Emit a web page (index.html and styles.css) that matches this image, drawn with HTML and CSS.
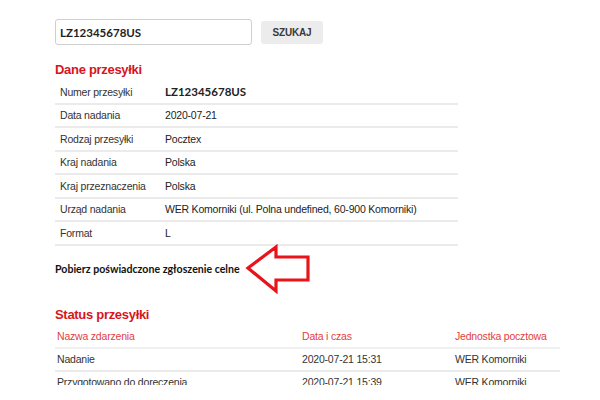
FILE: index.html
```html
<!DOCTYPE html>
<html lang="pl">
<head>
<meta charset="utf-8">
<title>Śledzenie przesyłki</title>
<link rel="stylesheet" href="styles.css">
</head>
<body>
<div class="page">
  <div class="search">
    <input class="search-input" type="text" value="LZ12345678US">
    <button class="search-btn">SZUKAJ</button>
  </div>

  <h2 class="section-title">Dane przesyłki</h2>
  <table class="details">
    <tr><td class="label">Numer przesyłki</td><td class="value strong">LZ12345678US</td></tr>
    <tr><td class="label">Data nadania</td><td class="value">2020-07-21</td></tr>
    <tr><td class="label">Rodzaj przesyłki</td><td class="value">Pocztex</td></tr>
    <tr><td class="label">Kraj nadania</td><td class="value">Polska</td></tr>
    <tr><td class="label">Kraj przeznaczenia</td><td class="value">Polska</td></tr>
    <tr><td class="label">Urząd nadania</td><td class="value">WER Komorniki (ul. Polna undefined, 60-900 Komorniki)</td></tr>
    <tr><td class="label">Format</td><td class="value">L</td></tr>
  </table>

  <div class="download">
    <span class="download-link">Pobierz poświadczone zgłoszenie celne</span>
    <svg class="arrow" width="66" height="50" viewBox="0 0 66 50">
      <polygon points="3,24 31,3 31,13 63,13 63,36 31,36 31,47" fill="none" stroke="#e8141c" stroke-width="3.2" stroke-linejoin="miter"/>
    </svg>
  </div>

  <h2 class="section-title status-title">Status przesyłki</h2>
  <table class="events">
    <tr class="head"><td class="c1">Nazwa zdarzenia</td><td class="c2">Data i czas</td><td class="c3">Jednostka pocztowa</td></tr>
    <tr><td>Nadanie</td><td>2020-07-21 15:31</td><td>WER Komorniki</td></tr>
    <tr><td>Przygotowano do doręczenia</td><td>2020-07-21 15:39</td><td>WER Komorniki</td></tr>
  </table>
</div>
</body>
</html>
```

FILE: styles.css
```css
html, body {
  margin: 0;
  padding: 0;
  background: #fff;
}

.page {
  height: 385px;
  overflow: hidden;
  box-sizing: border-box;
  padding: 19px 0 0 55px;
  font-family: "Liberation Sans", Arial, sans-serif;
  color: #333;
}

.search {
  display: flex;
  align-items: center;
  gap: 9px;
}

.search-input {
  width: 197px;
  height: 26px;
  box-sizing: border-box;
  margin: 0;
  border: 1px solid #cfcfcf;
  border-radius: 3px;
  padding: 0 4px;
  font-family: Lato, "Open Sans", sans-serif;
  font-weight: bold;
  font-size: 11.5px;
  color: #222;
  outline: none;
}

.search-btn {
  width: 62px;
  height: 23px;
  margin: 0;
  border: none;
  border-radius: 3px;
  background: #ececec;
  font-family: "Liberation Sans", Arial, sans-serif;
  font-size: 10px;
  font-weight: bold;
  letter-spacing: -0.2px;
  color: #3a3a3a;
  padding: 0;
}

.section-title {
  margin: 17px 0 0;
  font-size: 13px;
  line-height: 16px;
  letter-spacing: -0.3px;
  font-weight: bold;
  color: #d7141b;
}

.details {
  margin-top: 3px;
  width: 403px;
  border-collapse: collapse;
  font-size: 10.5px;
  letter-spacing: -0.2px;
}

.details td {
  height: 21.5px;
  padding: 0;
  border-bottom: 2px solid #ebebeb;
  vertical-align: middle;
  color: #333;
}

.details .label {
  width: 105px;
  padding-left: 5px;
}

.details .value {
  color: #222;
}

.details .strong {
  font-family: Lato, "Open Sans", sans-serif;
  font-weight: bold;
  font-size: 11.5px;
  letter-spacing: 0;
}

.download {
  display: flex;
  align-items: center;
  height: 46px;
  gap: 5px;
}

.download-link {
  font-family: Lato, "Open Sans", sans-serif;
  font-weight: bold;
  font-size: 10.6px;
  color: #111;
}

.arrow {
  margin: -2px 0;
  display: block;
}

.status-title {
  margin-top: 15px;
}

.events {
  margin-top: 3px;
  width: 505px;
  border-collapse: collapse;
  font-size: 10.5px;
  letter-spacing: -0.2px;
}

.events td {
  height: 21px;
  padding: 0 0 0 2px;
  border-bottom: 2px solid #ebebeb;
  vertical-align: middle;
  color: #333;
}

.events .head td {
  color: #e2413f;
  border-bottom-color: #efefef;
}

.events .c1 { width: 243px; }
.events .c2 { width: 151px; }
```
